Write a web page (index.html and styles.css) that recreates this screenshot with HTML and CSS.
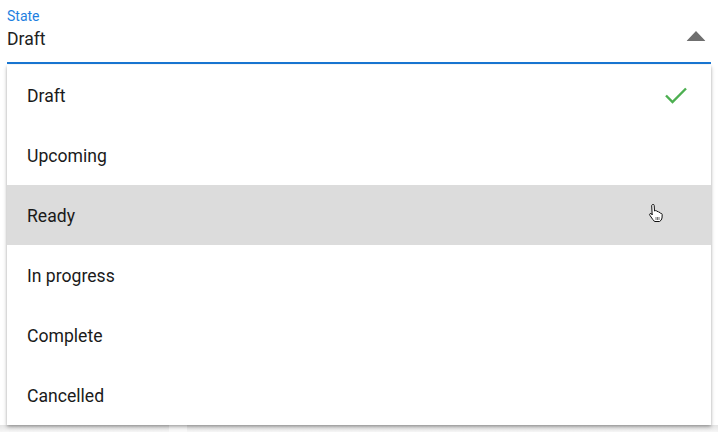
FILE: index.html
```html
<!DOCTYPE html>
<html>
<head>
<meta charset="utf-8">
<link rel="stylesheet" href="styles.css">
</head>
<body>
<div class="page">
  <div class="field">
    <div class="field-text">
      <div class="label">State</div>
      <div class="value">Draft</div>
    </div>
    <svg class="caret" width="20" height="12" viewBox="0 0 20 12"><path d="M10 1 L19 10.5 Q19.5 11 18.8 11 L1.2 11 Q0.5 11 1 10.5 Z" fill="#6f6f6f"/></svg>
  </div>
  <ul class="menu">
    <li class="item">Draft
      <svg class="check" width="24" height="18" viewBox="0 0 24 18"><path d="M2 9.5 L8.5 16 L22 2.5" fill="none" stroke="#4caf50" stroke-width="2.4"/></svg>
    </li>
    <li class="item">Upcoming</li>
    <li class="item hover">Ready
      <svg class="hand" width="18" height="20" viewBox="0 0 18 20"><path d="M5.5 1.5 Q7 1 7.2 2.5 L7.5 8 L8.5 7.6 Q9.8 7.4 10 8.5 Q11.4 8 11.8 9.3 Q13.2 9 13.6 10.4 Q15 10.2 15.2 11.6 L15 15 Q14.6 17.5 12.5 18.5 L8 18.5 Q6.5 18 5.8 16.5 L3 12.5 Q2 11 3.2 10.5 Q4.2 10.3 5 11.4 L5.2 12 L4.7 2.8 Q4.8 1.8 5.5 1.5 Z" fill="#fff" stroke="#111" stroke-width="1"/><path d="M9 14 V17 M10.5 14 V17 M12 14 V17" stroke="#555" stroke-width="0.8"/></svg>
    </li>
    <li class="item">In progress</li>
    <li class="item">Complete</li>
    <li class="item">Cancelled</li>
  </ul>
  <div class="behind">
    <div class="behind-cell"></div>
    <div class="behind-gap"></div>
    <div class="behind-cell wide"></div>
  </div>
</div>
</body>
</html>
```

FILE: styles.css
```css
* { box-sizing: border-box; }
html, body { margin: 0; padding: 0; background: #fff; }
body { font-family: Roboto, "Noto Sans", "Liberation Sans", sans-serif; overflow: hidden; }
.page { width: 718px; height: 432px; padding: 0 7px; display: flex; flex-direction: column; }
.field {
  display: flex;
  align-items: flex-start;
  justify-content: space-between;
  border-bottom: 2px solid #1976d2;
  padding-top: 8px;
  height: 64px;
}
.label { font-size: 14px; line-height: 16px; color: #1e7fe0; }
.value { font-size: 17.6px; line-height: 24px; color: #212121; margin-top: 3px; }
.caret { margin-top: 22px; margin-right: 5px; }
.menu {
  list-style: none;
  margin: 1px 0 0 0;
  padding: 0;
  background: #fff;
  box-shadow: 0 2px 4px rgba(0,0,0,0.28), 0 1px 2px rgba(0,0,0,0.12);
  position: relative;
  z-index: 1;
}
.item {
  height: 60px;
  display: flex;
  align-items: center;
  justify-content: space-between;
  padding: 1px 22px 0 20px;
  font-size: 17.6px;
  color: #1a1a1a;
}
.item.hover { background: #dcdcdc; }
.check { margin-top: -1px; margin-right: 1px; }
.hand { margin-right: 24px; margin-top: -6px; }
.behind { flex: 1; display: flex; background: #f3f3f3; margin: 0 -7px; }
.behind-cell { width: 169px; background: linear-gradient(#e4e4e4, #f6f6f6); }
.behind-gap { width: 18px; background: #fafafa; }
.behind-cell.wide { flex: 1; }
```
